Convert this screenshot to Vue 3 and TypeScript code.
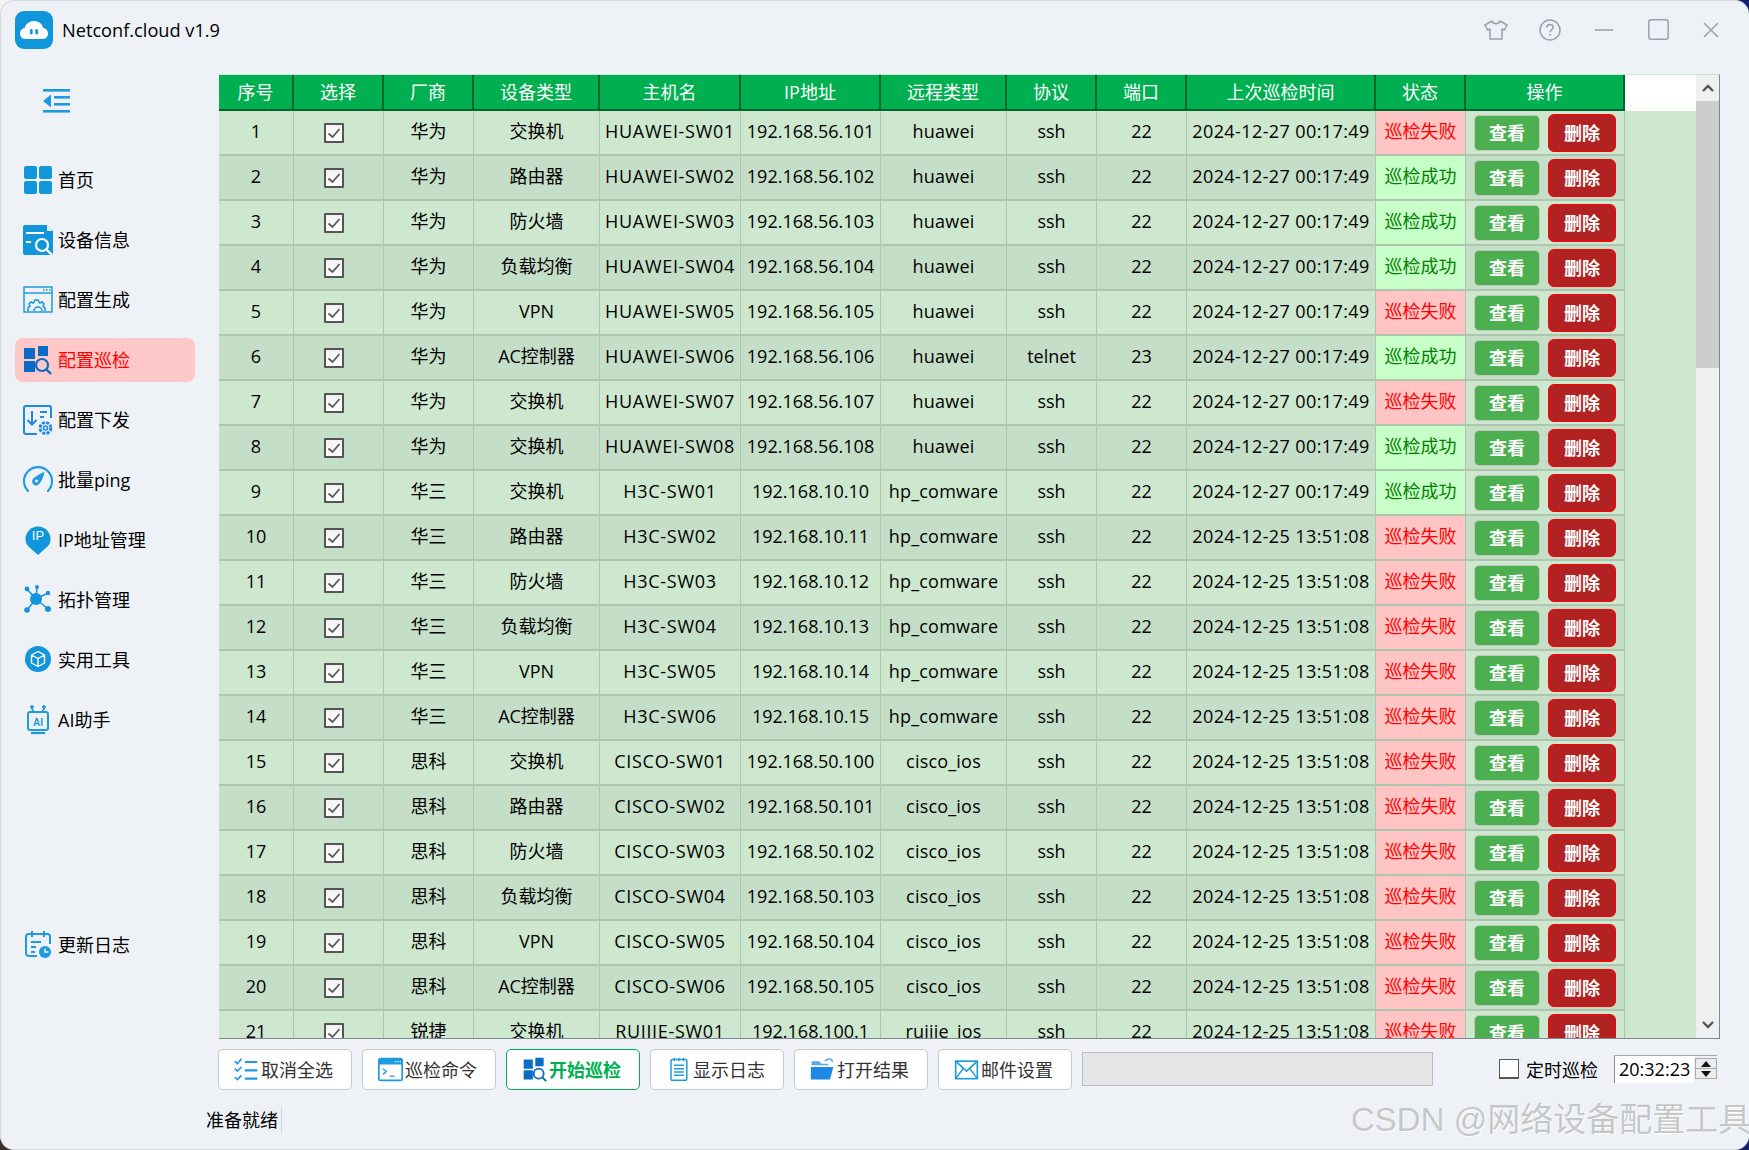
<script setup lang="ts">
interface Row {
  no: number
  vendor: string
  type: string
  host: string
  ip: string
  remote: string
  proto: string
  port: number
  time: string
  ok: boolean
}

const types = ['交换机', '路由器', '防火墙', '负载均衡', 'VPN', 'AC控制器']
const okRows = new Set([2, 3, 4, 6, 8, 9])
const t1 = '2024-12-27 00:17:49'
const t2 = '2024-12-25 13:51:08'

function make(no: number): Row {
  let vendor = '华为'
  let type = ''
  let host = ''
  let ip = ''
  let remote = 'huawei'
  if (no <= 8) {
    type = no <= 6 ? types[no - 1] : '交换机'
    host = `HUAWEI-SW0${no}`
    ip = `192.168.56.${100 + no}`
  } else if (no === 9) {
    vendor = '华三'
    type = '交换机'
    host = 'H3C-SW01'
    ip = '192.168.10.10'
    remote = 'hp_comware'
  } else if (no <= 14) {
    vendor = '华三'
    type = types[no - 9]
    host = `H3C-SW0${no - 8}`
    ip = `192.168.10.${no + 1}`
    remote = 'hp_comware'
  } else if (no <= 20) {
    vendor = '思科'
    type = types[no - 15]
    host = `CISCO-SW0${no - 14}`
    ip = `192.168.50.${85 + no}`
    remote = 'cisco_ios'
  } else {
    vendor = '锐捷'
    type = '交换机'
    host = 'RUIJIE-SW01'
    ip = '192.168.100.1'
    remote = 'ruijie_ios'
  }
  return {
    no,
    vendor,
    type,
    host,
    ip,
    remote,
    proto: no === 6 ? 'telnet' : 'ssh',
    port: no === 6 ? 23 : 22,
    time: no <= 9 ? t1 : t2,
    ok: okRows.has(no),
  }
}

const rows: Row[] = Array.from({ length: 21 }, (_, i) => make(i + 1))
const headers = ['序号', '选择', '厂商', '设备类型', '主机名', 'IP地址', '远程类型', '协议', '端口', '上次巡检时间', '状态', '操作']
const widths = [75, 90, 90, 126, 141, 140, 126, 90, 90, 189, 90, 159, 71]

const navTop = [
  { key: 'home', label: '首页' },
  { key: 'info', label: '设备信息' },
  { key: 'gen', label: '配置生成' },
  { key: 'check', label: '配置巡检', active: true },
  { key: 'push', label: '配置下发' },
  { key: 'ping', label: '批量ping' },
  { key: 'ip', label: 'IP地址管理' },
  { key: 'topo', label: '拓扑管理' },
  { key: 'tool', label: '实用工具' },
  { key: 'ai', label: 'AI助手' },
]

const tools = [
  { key: 'uncheck', label: '取消全选' },
  { key: 'cmd', label: '巡检命令' },
  { key: 'start', label: '开始巡检', primary: true },
  { key: 'log', label: '显示日志' },
  { key: 'open', label: '打开结果' },
  { key: 'mail', label: '邮件设置' },
]
</script>

<template>
  <div class="desk">
    <div class="window">
      <header class="titlebar">
        <svg class="logo" viewBox="0 0 38 38">
          <rect width="38" height="38" rx="9" fill="#1296db" />
          <path d="M11 28c-3.600 0-6-2.500-6-5.600 0-2.800 2-5 4.800-5.400C10.600 13 14.400 10 19 10s8.400 3 9.200 7c2.800.4 4.800 2.600 4.800 5.400 0 3.100-2.400 5.600-6 5.600z" fill="#fff" />
          <rect x="15" y="18" width="2.600" height="5.600" rx="1.300" fill="#1296db" />
          <rect x="20.400" y="18" width="2.600" height="5.600" rx="1.300" fill="#1296db" />
        </svg>
        <span class="app-name">Netconf.cloud v1.9</span>
        <div class="win-btns">
          <svg class="wb" viewBox="0 0 24 20" style="width:24px;height:20px"><path d="M8 1 1 5l2.500 5L6 9v10h12V9l2.500 1L23 5l-7-4c-1 3.500-7 3.500-8 0z" fill="none" stroke="#9aa0ac" stroke-width="1.500" stroke-linejoin="round" /></svg>
          <svg class="wb" viewBox="0 0 22 22" style="width:22px;height:22px"><circle cx="11" cy="11" r="10" fill="none" stroke="#9aa0ac" stroke-width="1.500" /><path d="M7.800 8.600c0-4.200 6.400-4.200 6.400-.2 0 2.400-3.200 2.400-3.200 4.900" fill="none" stroke="#9aa0ac" stroke-width="1.500" /><circle cx="11" cy="16" r="1.100" fill="#9aa0ac" /></svg>
          <svg class="wb" viewBox="0 0 18 20" style="width:18px;height:20px"><path d="M0 10h18" stroke="#9aa0ac" stroke-width="1.600" /></svg>
          <svg class="wb" viewBox="0 0 21 21" style="width:21px;height:21px"><rect x=".8" y=".8" width="19.400" height="19.400" rx="2.500" fill="none" stroke="#9aa0ac" stroke-width="1.500" /></svg>
          <svg class="wb" viewBox="0 0 16 16" style="width:16px;height:16px"><path d="M1 1l14 14M15 1 1 15" stroke="#9aa0ac" stroke-width="1.500" /></svg>
        </div>
      </header>

      <div class="body">
        <aside class="sidebar">
          <div class="collapse">
            <svg viewBox="0 0 28 24" width="28" height="24">
              <g fill="#1e9be0">
                <rect x="1" y="0" width="27" height="2.600" />
                <rect x="12" y="7" width="16" height="2.600" />
                <rect x="12" y="14" width="16" height="2.600" />
                <rect x="1" y="21" width="27" height="2.600" />
                <path d="M9 5.500v13L1 12z" />
              </g>
            </svg>
          </div>
          <nav class="nav">
            <div v-for="n in navTop" :key="n.key" class="nav-item" :class="{ active: n.active }">
              <span class="nav-inner">
                <svg class="nav-ico" viewBox="0 0 30 30">
                  <g v-if="n.key === 'home'" fill="#1296db">
                    <rect x="1" y="1" width="13" height="13" rx="2" />
                    <rect x="16" y="1" width="13" height="13" rx="2" />
                    <rect x="1" y="16" width="13" height="13" rx="2" />
                    <rect x="16" y="16" width="13" height="13" rx="2" />
                  </g>
                  <g v-else-if="n.key === 'info'">
                    <path d="M2 0h22l6 6v22a2 2 0 0 1-2 2H2a2 2 0 0 1-2-2V2a2 2 0 0 1 2-2z" fill="#1296db" />
                    <path d="M3 8h18M3 17h5" stroke="#fff" stroke-width="2.200" />
                    <circle cx="19" cy="20" r="6" fill="#1296db" stroke="#fff" stroke-width="2.200" />
                    <path d="M23.500 24.500 29 30" stroke="#fff" stroke-width="2.400" />
                    <path d="M24 0v6h6" fill="#eef2f6" />
                  </g>
                  <g v-else-if="n.key === 'gen'" fill="none" stroke="#1296db">
                    <rect x="1" y="2" width="28" height="25" stroke-width="1.400" />
                    <path d="M1 8h28" stroke-width="1.400" />
                    <path d="M20 5h1.500M23 5h1.500M26 5h1.500" stroke-width="1.600" />
                    <path d="M5 26v-3c0-1 2-1 2-2l-1-2 2-2 2 1c1 0 1-2 2-3h3c1 1 1 3 2 3l2-1 2 2-1 2c0 1 2 1 2 2v3" stroke-width="1.500" />
                    <path d="M11 26a4 4 0 0 1 8 0" stroke-width="1.500" />
                  </g>
                  <g v-else-if="n.key === 'check'">
                    <path d="M1 3h11v11H1zM1 16h11v11H1zM15 1h10v10H15z" fill="#0a6cc4" />
                    <circle cx="19" cy="20" r="6" fill="#ffc8c8" stroke="#0a6cc4" stroke-width="2.200" />
                    <path d="M23.500 24.500 28 29" stroke="#0a6cc4" stroke-width="2.400" />
                  </g>
                  <g v-else-if="n.key === 'push'" fill="none" stroke="#1e88e5">
                    <path d="M28 13V3a2 2 0 0 0-2-2H3a2 2 0 0 0-2 2v24a2 2 0 0 0 2 2h11" stroke-width="2" />
                    <path d="M9 6v13M4.500 15 9 19.500 13.500 15M17 7h7M17 12h4" stroke-width="2" />
                    <circle cx="22.500" cy="23" r="5.400" stroke-width="3" stroke-dasharray="3 1.240" />
                    <circle cx="22.500" cy="23" r="2" stroke-width="1.500" />
                  </g>
                  <g v-else-if="n.key === 'ping'">
                    <path d="M5 26a14 14 0 1 1 20 0" fill="none" stroke="#1e9be0" stroke-width="2.200" stroke-linecap="round" />
                    <path d="M21.500 7c-.5 4-3 9.500-5 11.500a4 4 0 1 1-5.500-5.500C13 11 17.500 8.500 21.500 7z" fill="#1e9be0" />
                    <circle cx="13.500" cy="16" r="1.600" fill="#eef2f6" />
                  </g>
                  <g v-else-if="n.key === 'ip'">
                    <path d="M15 30 5.500 21.500C3.500 19.500 2.500 17 2.500 14a12.500 12.500 0 0 1 25 0c0 3-1 5.500-3 7.500z" fill="#1296db" />
                  </g>
                  <g v-else-if="n.key === 'topo'" fill="#1296db">
                    <circle cx="13" cy="14" r="6" />
                    <circle cx="4" cy="4" r="2.400" />
                    <circle cx="14" cy="2" r="2" />
                    <circle cx="25" cy="8" r="2.200" />
                    <circle cx="4" cy="25" r="2.800" />
                    <circle cx="25" cy="24" r="3" />
                    <path d="M4 4l9 10M14 2l-1 12M25 8l-12 6M4 25l9-11M25 24 13 14" stroke="#1296db" stroke-width="1.500" />
                  </g>
                  <g v-else-if="n.key === 'tool'">
                    <circle cx="15" cy="14" r="13" fill="#1296db" />
                    <path d="M15 6.500 21.500 10v8L15 21.500 8.500 18v-8zM8.500 10l6.500 3.500L21.500 10M15 13.500v8" fill="none" stroke="#fff" stroke-width="1.400" stroke-linejoin="round" />
                  </g>
                  <g v-else-if="n.key === 'ai'" fill="none" stroke="#1e9be0">
                    <path d="M9 1v3l2 3M21 1v3l-2 3" stroke-width="1.600" />
                    <circle cx="9" cy="2" r="1.400" fill="#1e9be0" />
                    <circle cx="21" cy="2" r="1.400" fill="#1e9be0" />
                    <rect x="5" y="7" width="20" height="18" rx="2" stroke-width="2" />
                    <path d="M8 28h14" stroke-width="2.200" />
                    <text x="15" y="21" text-anchor="middle" class="ai-text">AI</text>
                  </g>
                </svg>
                <span v-if="n.key === 'ip'" class="ip-badge">IP</span>
                <span class="nav-label">{{ n.label }}</span>
              </span>
            </div>
          </nav>
          <div class="nav-item changelog">
            <span class="nav-inner">
              <svg class="nav-ico" viewBox="0 0 30 30" fill="none" stroke="#1e9be0">
                <path d="M14 26H6a3 3 0 0 1-3-3V7a3 3 0 0 1 3-3h18a3 3 0 0 1 3 3v7" stroke-width="2" />
                <path d="M9 1v6M21 1v6M8 12h10M8 17h5M8 22h4" stroke-width="2" />
                <circle cx="22" cy="22" r="6" fill="#1e9be0" stroke="none" />
                <path d="M22 18.500V22h3.500" stroke="#eef2f6" stroke-width="1.500" />
              </svg>
              <span class="nav-label">更新日志</span>
            </span>
          </div>
        </aside>

        <main class="content">
          <section class="frame">
            <div class="table-clip">
              <table class="grid">
                <colgroup>
                  <col v-for="(w, i) in widths" :key="i" :style="{ width: w + 'px' }" />
                </colgroup>
                <thead>
                  <tr>
                    <th v-for="h in headers" :key="h">{{ h }}</th>
                    <th class="blank"></th>
                  </tr>
                </thead>
                <tbody>
                  <tr v-for="r in rows" :key="r.no" :class="{ alt: r.no % 2 === 0 }">
                    <td>{{ r.no }}</td>
                    <td class="chk-cell">
                      <span class="chk">
                        <svg viewBox="0 0 16 16" width="16" height="16"><path d="M2.500 8.500 6.500 12 13.500 4" fill="none" stroke="#5a5a5a" stroke-width="1.800" /></svg>
                      </span>
                    </td>
                    <td>{{ r.vendor }}</td>
                    <td>{{ r.type }}</td>
                    <td class="host">{{ r.host }}</td>
                    <td>{{ r.ip }}</td>
                    <td class="remote">{{ r.remote }}</td>
                    <td>{{ r.proto }}</td>
                    <td>{{ r.port }}</td>
                    <td class="time">{{ r.time }}</td>
                    <td :class="r.ok ? 'ok' : 'bad'">{{ r.ok ? '巡检成功' : '巡检失败' }}</td>
                    <td class="ops">
                      <div class="ops-in">
                        <button class="btn-view">查看</button>
                        <button class="btn-del">删除</button>
                      </div>
                    </td>
                    <td class="filler"></td>
                  </tr>
                </tbody>
              </table>
            </div>
            <div class="vscroll">
              <div class="arrow">
                <svg viewBox="0 0 12 8" width="12" height="8"><path d="M1 7l5-5 5 5" fill="none" stroke="#555" stroke-width="2.400" /></svg>
              </div>
              <div class="thumb"></div>
              <div class="track"></div>
              <div class="arrow">
                <svg viewBox="0 0 12 8" width="12" height="8"><path d="M1 1l5 5 5-5" fill="none" stroke="#555" stroke-width="2.400" /></svg>
              </div>
            </div>
          </section>

          <section class="toolbar">
            <button v-for="t in tools" :key="t.key" class="tool" :class="{ primary: t.primary }">
              <svg class="tool-ico" viewBox="0 0 30 30">
                <g v-if="t.key === 'uncheck'" fill="none" stroke="#1e9be0" stroke-width="2">
                  <path d="M1 5l3 3 5-6M1 14l3 3 5-5M1 24l3 3 5-5" />
                  <path d="M13 6h15M13 16h15M13 26h15" stroke-width="2.600" />
                </g>
                <g v-else-if="t.key === 'cmd'">
                  <rect x="1" y="2" width="28" height="26" rx="2" fill="#fff" stroke="#1e9be0" stroke-width="2" />
                  <path d="M1 4a2 2 0 0 1 2-2h24a2 2 0 0 1 2 2v5H1z" fill="#1e9be0" />
                  <path d="M20 5.500h1.500M23 5.500h1.500M26 5.500h1.500" stroke="#fff" stroke-width="1.600" />
                  <path d="M6 14l4 3.500-4 3.500M14 23h6" fill="none" stroke="#1e9be0" stroke-width="1.600" />
                </g>
                <g v-else-if="t.key === 'start'">
                  <path d="M2 3h11v11H2zM2 16h11v11H2zM16 1h10v10H16z" fill="#0a6cc4" />
                  <circle cx="20" cy="20" r="6" fill="#fff" stroke="#0a6cc4" stroke-width="2.200" />
                  <path d="M24.500 24.500 29 29" stroke="#0a6cc4" stroke-width="2.400" />
                </g>
                <g v-else-if="t.key === 'log'" fill="none" stroke="#1e9be0">
                  <rect x="6" y="3" width="19" height="25" rx="1.500" stroke-width="1.800" />
                  <path d="M10 1v4M15.500 1v4M21 1v4" stroke-width="1.600" />
                  <path d="M9.500 10h12M9.500 14h12M9.500 18h12M9.500 22h12" stroke-width="1.800" />
                </g>
                <g v-else-if="t.key === 'open'">
                  <path d="M2 10V5h9l3 3h8v2z" fill="#5aa7ea" />
                  <path d="M18 5c2-2.500 5-3 8-2l1 3" fill="none" stroke="#5aa7ea" stroke-width="1.800" />
                  <path d="M7 12h21l-4 15H1V12z" fill="#1e88e5" />
                </g>
                <g v-else fill="none" stroke="#1e9be0">
                  <rect x="2" y="5" width="26" height="21" stroke-width="2" />
                  <path d="M2 5l13 12L28 5M2 26l9-12M28 26l-9-12" stroke-width="1.800" />
                </g>
              </svg>
              <span class="tool-label">{{ t.label }}</span>
            </button>
            <div class="progress"></div>
            <label class="timer">
              <span class="empty-box"></span>
              <span>定时巡检</span>
            </label>
            <div class="spin">
              <span class="spin-val">20:32:23</span>
              <span class="spin-btns">
                <i class="up"></i>
                <i class="down"></i>
              </span>
            </div>
          </section>

          <footer class="status"><span class="status-text">准备就绪</span></footer>
        </main>
      </div>
    </div>
    <div class="watermark">CSDN @网络设备配置工具</div>
  </div>
</template>

<style>
html, body { margin: 0; padding: 0; background: #14206e; }
</style>

<style scoped>
* { box-sizing: border-box; }
.desk {
  position: relative;
  width: 1749px;
  height: 1150px;
  overflow: hidden;
  background:
    linear-gradient(#f4f4f4, #f4f4f4) 0 0 / 30px 30px no-repeat,
    linear-gradient(90deg, #3a2e2a 0 50%, #14206e 50% 100%);
  font-family: "Open Sans", "Noto Sans CJK SC", sans-serif;
  color: #000;
}
.window {
  width: 100%;
  height: 100%;
  display: flex;
  flex-direction: column;
  background: #eef2f6;
  border: 1px solid #d8dce0;
  border-right: 0;
  border-radius: 14px;
}
.titlebar { height: 63px; flex: none; display: flex; align-items: center; padding: 0 30px 6px 14px; }
.logo { width: 38px; height: 38px; flex: none; }
.app-name { margin-left: 9px; font-size: 18.200px; }
.win-btns { margin-left: auto; display: flex; align-items: center; }
.wb { flex: none; display: block; }
.wb:nth-child(1) { margin-right: 31px; }
.wb:nth-child(2) { margin-right: 34px; }
.wb:nth-child(3) { margin-right: 35px; }
.wb:nth-child(4) { margin-right: 34px; }

.body { flex: 1; min-height: 0; display: flex; }
.sidebar { width: 218px; flex: none; display: flex; flex-direction: column; padding-left: 14px; }
.collapse { height: 86px; padding: 25px 0 0 27px; flex: none; }
.collapse svg { display: block; }
.nav { display: flex; flex-direction: column; }
.nav-item { height: 60px; width: 180px; display: flex; align-items: center; }
.nav-inner { height: 44px; width: 180px; display: flex; align-items: center; padding-left: 8px; border-radius: 8px; position: relative; }
.nav-item.active .nav-inner { background: #ffc8c8; color: #ff0000; }
.nav-ico { width: 30px; height: 30px; flex: none; }
.nav-label { margin-left: 5px; padding-bottom: 2px; font-size: 18px; }
.ai-text { font-size: 10px; font-weight: 700; font-family: "Liberation Sans", sans-serif; fill: #1e9be0; stroke: none; }
.ip-badge {
  position: absolute;
  left: 11px;
  top: 10px;
  width: 24px;
  text-align: center;
  font-size: 13px;
  line-height: 16px;
  color: #fff;
  font-family: "Liberation Sans", sans-serif;
}
.changelog { margin-top: 165px; }

.content { flex: 1; min-width: 0; display: flex; flex-direction: column; padding-top: 10px; }
.frame {
  height: 965px;
  flex: none;
  width: 1501px;
  display: flex;
  border-right: 1px solid #7f8790;
  border-bottom: 1px solid #7f8790;
  border-top: 1px solid #cde8cf;
}
.table-clip { width: 1477px; flex: none; overflow: hidden; background: #cde8cf; }
.grid { width: 1477px; table-layout: fixed; border-collapse: separate; border-spacing: 0; }
.grid th {
  height: 36px;
  padding: 0;
  background: #00b050;
  color: #fff;
  font-weight: 400;
  font-size: 18px;
  line-height: 22px;
  border-right: 2px solid #00662e;
  border-bottom: 2px solid #00662e;
  text-align: center;
}
.grid th.blank { background: #fff; border: 0; }
.grid td {
  height: 45px;
  padding: 0 0 3px;
  text-align: center;
  font-size: 18px;
  line-height: 24px;
  white-space: nowrap;
  overflow: hidden;
  background: #cee8cf;
  border-right: 1px solid #aec5b0;
  border-bottom: 2px solid #aec5b0;
}
.grid td.host { letter-spacing: 0.700px; }
.grid td.remote { letter-spacing: 0.200px; }
.grid td.time { letter-spacing: 0.400px; }
.grid tr.alt td { background: #c5dec8; }
.grid td.ok, .grid tr.alt td.ok { background: #c8ffc8; color: #008000; }
.grid td.bad, .grid tr.alt td.bad { background: #ffc4c4; color: #ff0000; }
.grid td.filler, .grid tr.alt td.filler { background: #cde8cf; border: 0; }
.grid td.chk-cell { padding-right: 10px; }
.chk {
  display: inline-flex;
  align-items: center;
  justify-content: center;
  width: 20px;
  height: 20px;
  vertical-align: middle;
  background: linear-gradient(#f2f2f2, #fff);
  border: 2px solid #555;
  border-radius: 1px;
}
.grid td.ops { padding: 1px 0 0; }
.ops-in { display: flex; align-items: center; padding-left: 8px; gap: 8px; }
.ops-in button { font-family: inherit; font-weight: 700; font-size: 18px; color: #fff; padding: 0 0 1px; line-height: 22px; }
.btn-view { width: 66px; height: 36px; background: #4caf50; border: 1px solid #c0c8c0; border-radius: 5px; }
.btn-del { width: 68px; height: 38px; background: #b22222; border: 1px solid #ff0000; border-radius: 6px; }

.vscroll { width: 23px; flex: none; display: flex; flex-direction: column; background: #f0f0f0; }
.arrow { height: 26px; flex: none; display: flex; align-items: center; justify-content: center; }
.thumb { height: 267px; flex: none; background: #cdcdcd; }
.track { flex: 1; }

.toolbar { height: 65px; flex: none; display: flex; align-items: flex-start; padding-top: 10px; margin-left: -1px; }
.tool {
  width: 134px;
  height: 41px;
  margin-right: 10px;
  flex: none;
  display: flex;
  align-items: center;
  justify-content: center;
  gap: 2px;
  background: #fff;
  border: 1px solid #c8cbce;
  border-radius: 5px;
  font-family: inherit;
  font-size: 18px;
  color: #333;
  padding: 0 3px 0 0;
}
.tool.primary { border: 1px solid #00b050; color: #00b050; font-weight: 700; }
.tool-ico { width: 25px; height: 25px; flex: none; }
.tool-label { padding-bottom: 2px; }
.progress { width: 351px; height: 34px; margin-top: 3px; background: #e5e5e5; border: 1px solid #bdbdbd; flex: none; }
.timer { margin-left: 66px; display: flex; align-items: center; font-size: 18px; height: 28px; margin-top: 6px; flex: none; }
.empty-box { width: 20px; height: 20px; background: #fff; border: 1px solid #555; border-bottom-width: 2px; margin-right: 7px; }
.spin {
  margin-left: 16px;
  margin-top: 6px;
  width: 103px;
  height: 28px;
  flex: none;
  display: flex;
  border-left: 1px solid #888;
  border-top: 1px solid #aaa;
}
.spin-val { width: 80px; height: 27px; background: #fff; padding-left: 4px; font-size: 18px; line-height: 26px; }
.spin-btns { width: 22px; margin-left: 1px; display: flex; flex-direction: column; align-items: center; background: #ececec; border: 1px solid #aaa; height: 21px; margin-top: 2px; }
.spin-btns i { flex: 1; width: 100%; display: flex; align-items: center; justify-content: center; }
.spin-btns i::before { content: ""; border-left: 5px solid transparent; border-right: 5px solid transparent; }
.spin-btns .up { border-bottom: 1px solid #aaa; }
.spin-btns .up::before { border-bottom: 6px solid #111; }
.spin-btns .down::before { border-top: 6px solid #111; }

.status { flex: 1; display: flex; align-items: flex-start; padding-top: 3px; margin-left: -13px; font-size: 18px; }
.status-text { height: 26px; line-height: 26px; padding-right: 3px; border-right: 1px solid #d4d8dc; }

.watermark {
  position: absolute;
  left: 1351px;
  top: 1098px;
  font-size: 33px;
  line-height: 44px;
  white-space: nowrap;
  color: rgba(190, 190, 190, 0.85);
  text-shadow: 1px 1px 1px rgba(255, 255, 255, 0.9);
  font-family: "Liberation Sans", "Noto Sans CJK SC", sans-serif;
}
</style>
